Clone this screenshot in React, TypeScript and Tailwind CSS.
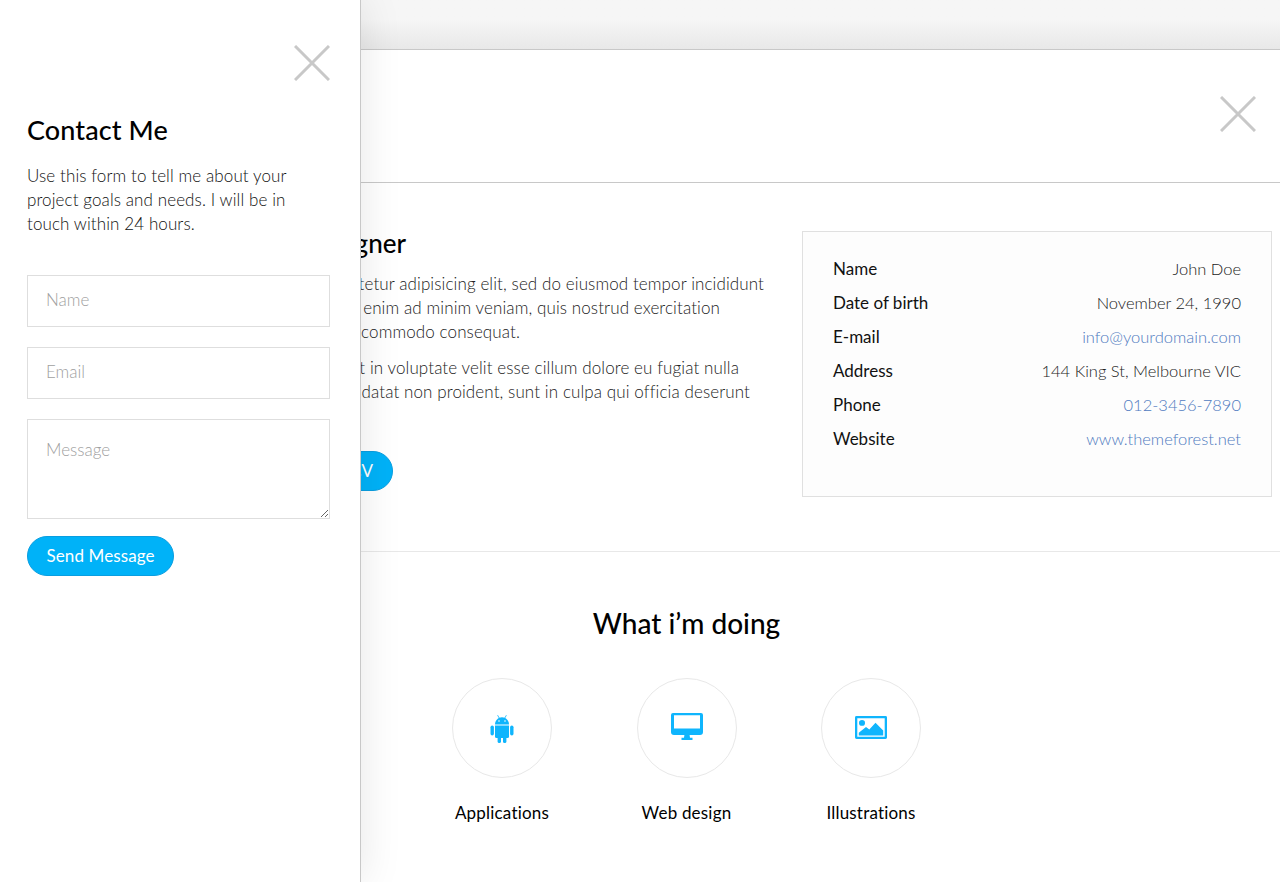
import React from "react";

const font = "font-['Lato','Liberation_Sans',sans-serif]";

function Close({ className }: { className: string }) {
  return (
    <svg viewBox="0 0 36 36" className={className} fill="none" stroke="#c8c8c8" strokeWidth="3">
      <path d="M1 1L35 35M35 1L1 35" />
    </svg>
  );
}

function Android() {
  return (
    <svg viewBox="0 0 24 29" className="w-[24px] h-[29px]" fill="currentColor">
      <path d="M7.6 1.2L9.2 4M16.4 1.2L14.8 4" stroke="currentColor" strokeWidth="0.8" />
      <path d="M5 10.5C5 6.5 8 3.2 12 3.2S19 6.5 19 10.5Z" />
      <circle cx="9" cy="7" r="0.8" fill="#fff" />
      <circle cx="15" cy="7" r="0.8" fill="#fff" />
      <path d="M5 11.5H19V22.5A1.5 1.5 0 0 1 17.5 24H6.5A1.5 1.5 0 0 1 5 22.5Z" />
      <rect x="0.5" y="11.5" width="3.4" height="10" rx="1.7" />
      <rect x="20.1" y="11.5" width="3.4" height="10" rx="1.7" />
      <rect x="7.6" y="22" width="3.4" height="7" rx="1.6" />
      <rect x="13" y="22" width="3.4" height="7" rx="1.6" />
    </svg>
  );
}

function Monitor() {
  return (
    <svg viewBox="0 0 32 27" className="w-[32px] h-[27px] mb-[4px]" fill="currentColor">
      <path
        fillRule="evenodd"
        d="M2 0H30A2 2 0 0 1 32 2V19A3 3 0 0 1 29 22H3A3 3 0 0 1 0 19V2A2 2 0 0 1 2 0ZM3 2.2V15.5H29V2.2Z"
      />
      <path d="M13.4 22H18.6L19 24.8H21.5V27H10.5V24.8H13Z" />
    </svg>
  );
}

function Picture() {
  return (
    <svg viewBox="0 0 32 24" preserveAspectRatio="none" className="w-[32px] h-[23px] mb-[2px]" fill="currentColor">
      <path
        fillRule="evenodd"
        d="M1.5 0H30.5A1.5 1.5 0 0 1 32 1.5V22.5A1.5 1.5 0 0 1 30.5 24H1.5A1.5 1.5 0 0 1 0 22.5V1.5A1.5 1.5 0 0 1 1.5 0ZM2.3 2.3V21.7H29.7V2.3Z"
      />
      <circle cx="7" cy="7.3" r="3" />
      <path d="M3.8 20.3V17.6L11 11.6L14.3 14L20.5 7L28.2 15.2V20.3Z" />
    </svg>
  );
}

const info: [string, string, boolean][] = [
  ["Name", "John Doe", false],
  ["Date of birth", "November 24, 1990", false],
  ["E-mail", "info@yourdomain.com", true],
  ["Address", "144 King St, Melbourne VIC", false],
  ["Phone", "012-3456-7890", true],
  ["Website", "www.themeforest.net", true],
];

function Service({ icon, label }: { icon: React.ReactNode; label: string }) {
  return (
    <div className="w-[100px] flex flex-col items-center">
      <div className="w-[100px] h-[100px] rounded-full border border-[#e8e8e8] flex items-center justify-center text-[#0fb5fd]">
        {icon}
      </div>
      <div className="mt-[24px] text-[17px] tracking-[0.2px] leading-[22px] text-black whitespace-nowrap">{label}</div>
    </div>
  );
}

const inputClass =
  "w-full h-[52px] border border-[#dedede] px-[18px] pb-[3px] text-[17px] font-light outline-none placeholder:text-[#a0a0a0]";

export default function App() {
  return (
    <div className={`${font} relative w-full h-[882px] overflow-hidden bg-white`}>
      <div className="h-[50px] border-b border-[#c8c8c8] bg-gradient-to-b from-[#f6f6f6] from-40% to-[#e8e8e8]" />
      <div className="relative h-[133px] border-b border-[#c8c8c8]">
        <Close className="absolute right-[24px] top-[46px] w-[36px] h-[36px]" />
      </div>
      <div className="flex h-[369px] border-b border-[#e8e8e8]">
        <div className="w-[802px] shrink-0 pl-[72px] pt-[45px]">
          <h3 className="w-[334px] text-right text-[26px] leading-[30px] font-medium text-black whitespace-nowrap">Web Designer</h3>
          <div className="mt-[14px] text-[17px] tracking-[0.1px] leading-[24px] font-light text-[#222] whitespace-nowrap text-right">
            <p className="pr-[38px]">Lorem ipsum dolor sit amet, consectetur adipisicing elit, sed do eiusmod tempor incididunt</p>
            <p className="pr-[82px]">ut labore et dolore magna aliqua. Ut enim ad minim veniam, quis nostrud exercitation</p>
            <p className="pr-[282px]">ullamco laboris nisi ut aliquip ex ea commodo consequat.</p>
            <p className="mt-[12px] pr-[63px]">Duis aute irure dolor in reprehenderit in voluptate velit esse cillum dolore eu fugiat nulla</p>
            <p className="pr-[52px]">pariatur. Excepteur sint occaecat cupidatat non proident, sunt in culpa qui officia deserunt</p>
            <p className="text-left">mollit anim id est.</p>
          </div>
          <div className="mt-[23px] flex justify-end w-[321px]">
            <span className="h-[40px] rounded-[20px] bg-[#00b2f8] border border-[#0a9ee0] px-[19px] flex items-center text-white text-[17px] tracking-[0.1px] whitespace-nowrap">Download CV</span>
          </div>
        </div>
        <div className="mt-[48px] w-[470px] h-[266px] bg-[#fdfdfd] border border-[#e0e0e0] px-[30px] pt-[20px]">
          {info.map(([k, v, link]) => (
            <div key={k} className="flex justify-between h-[34px] items-center text-[17px]">
              <span className="text-[#111]">{k}</span>
              <span className={`font-light text-[16.5px] ${link ? "text-[#4f7ac0]" : "text-[#222]"}`}>{v}</span>
            </div>
          ))}
        </div>
      </div>
      <div className="pl-[93px] pt-[54px]">
        <h3 className="text-center text-[28px] leading-[34px] font-medium text-black">What i’m doing</h3>
        <div className="mt-[38px] flex justify-center gap-[84.5px]">
          <Service icon={<Android />} label="Applications" />
          <Service icon={<Monitor />} label="Web design" />
          <Service icon={<Picture />} label="Illustrations" />
        </div>
      </div>
      <aside className="absolute left-0 top-0 bottom-0 w-[361px] bg-white border-r border-[#c8c8c8] shadow-[0_0_40px_rgba(0,0,0,0.1)] pl-[27px] pr-[30px]">
        <div className="flex justify-end pt-[45px]">
          <Close className="w-[36px] h-[36px]" />
        </div>
        <h3 className="mt-[32px] text-[27px] tracking-[0.1px] leading-[34px] font-medium text-black">Contact Me</h3>
        <p className="mt-[17px] pr-[10px] text-[17px] tracking-[0.1px] leading-[24px] font-light text-[#111]">
          Use this form to tell me about your project goals and needs. I will be in touch within 24 hours.
        </p>
        <form className="mt-[39px] flex flex-col items-start">
          <input placeholder="Name" className={inputClass} />
          <input placeholder="Email" className={`mt-[20px] ${inputClass}`} />
          <textarea placeholder="Message" className="block mt-[20px] w-full h-[100px] border border-[#dedede] px-[18px] pt-[17px] text-[17px] font-light outline-none placeholder:text-[#a0a0a0]" />
          <button type="button" className="mt-[17px] h-[40px] rounded-[20px] bg-[#00b2f8] border border-[#0a9ee0] px-[18.5px] text-white text-[17px] tracking-[0.1px]">Send Message</button>
        </form>
      </aside>
    </div>
  );
}
